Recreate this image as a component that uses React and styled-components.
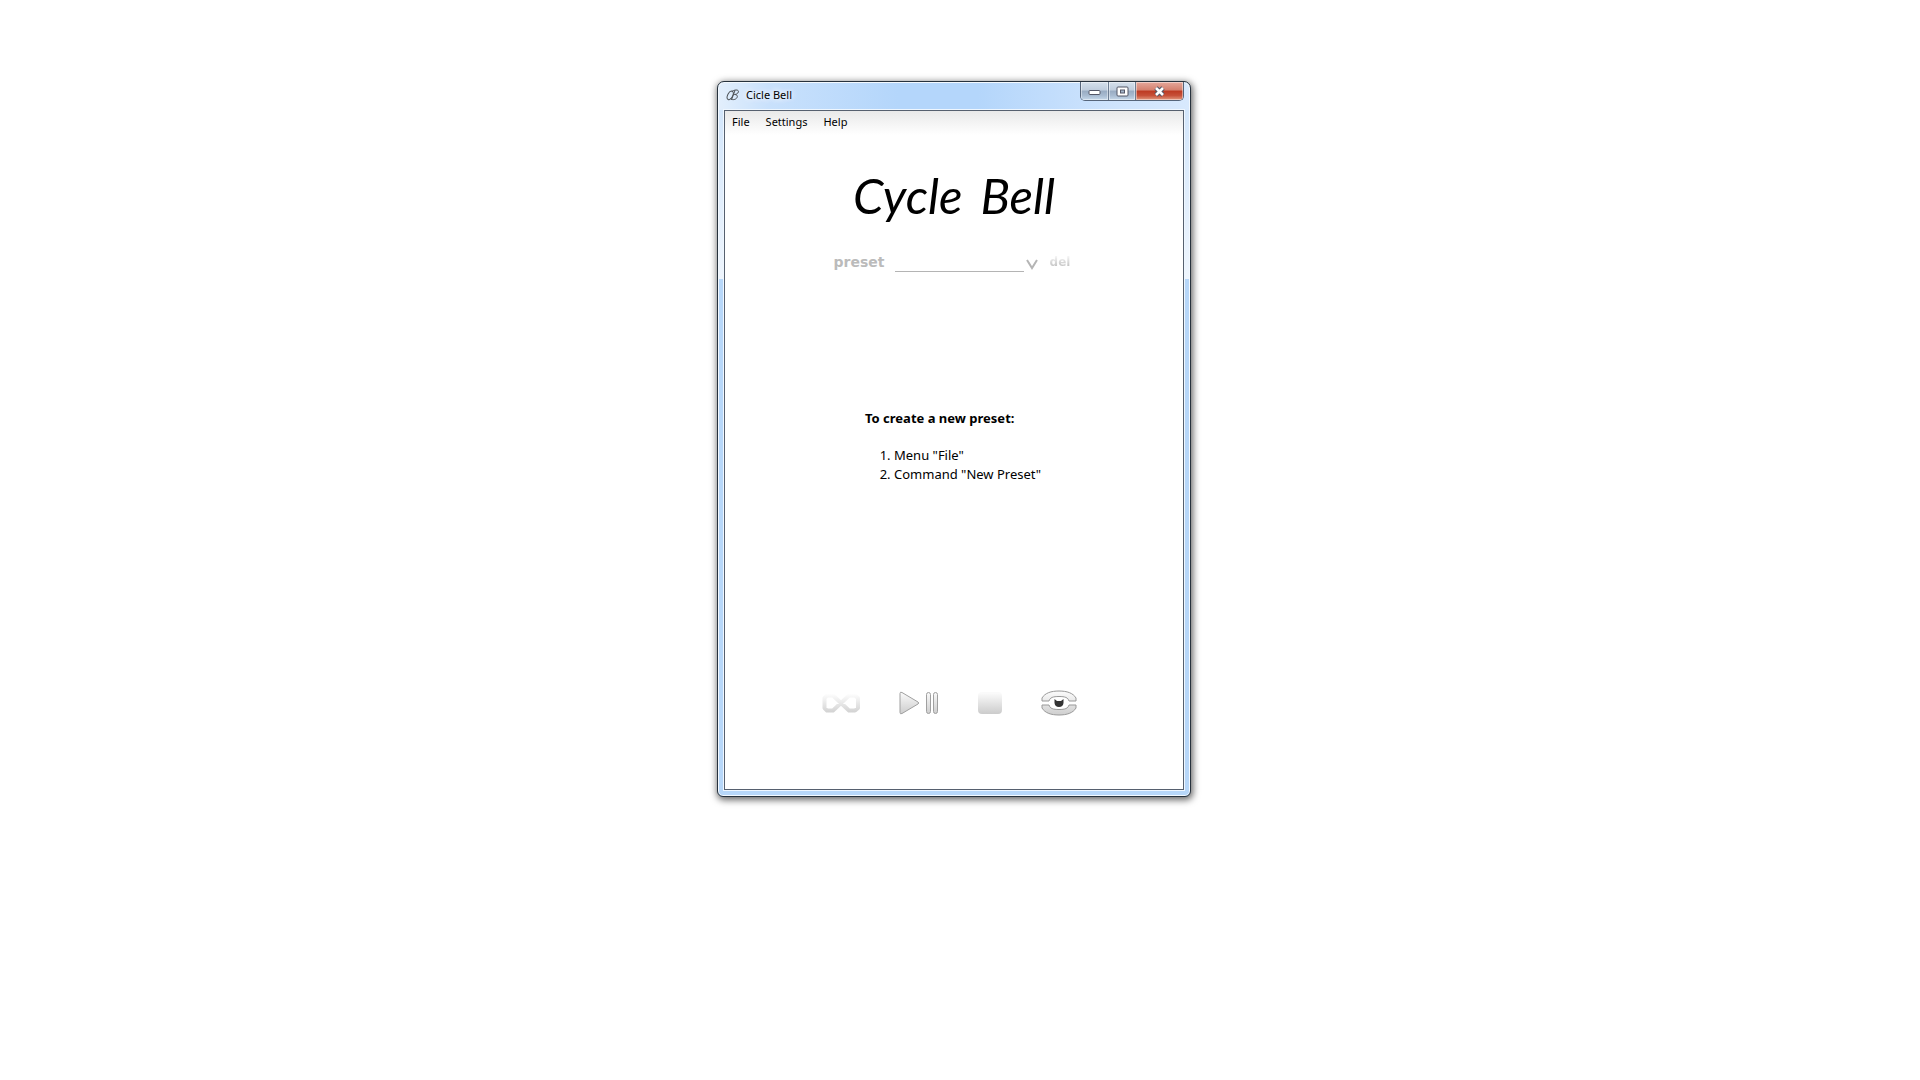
import React from "react";
import styled, { createGlobalStyle } from "styled-components";

const Global = createGlobalStyle`
  * { box-sizing: border-box; }
  body {
    margin: 0;
    background: #fff;
    color: #000;
    font: 12px/16px "Noto Sans", "Open Sans", sans-serif;
  }
  button, select { font: inherit; color: inherit; }
`;

const Desktop = styled.main`
  display: flex;
  justify-content: center;
  padding: 81px 12px 40px 0;
`;

const Window = styled.section`
  width: 474px;
  max-width: 100%;
  padding: 0 6px 6px;
  border: 1px solid #27323d;
  border-radius: 7px 7px 6px 6px;
  background:
    linear-gradient(90deg, #e3effc 0, #c9e1fc 50px, #b4d6fb 180px, #b4d6fb 260px, #cfe4fd 400px, #d8e9fd 100%) top / 100% 28px no-repeat,
    linear-gradient(#d3e6fb, #eef5fd) 0 28px / 100% 169px no-repeat,
    #b7d7f9;
  box-shadow: inset 0 0 0 1px #f3f9ff, 1px 2px 7px 1px rgba(0, 0, 0, 0.6);
`;

const TitleBar = styled.header`
  display: flex;
  height: 28px;
  padding-left: 2px;
`;

const Title = styled.h1`
  display: flex;
  align-items: center;
  gap: 6px;
  flex: 1;
  height: 26px;
  margin: 0;
  font-size: 11px;
  line-height: 16px;
  font-weight: 400;
  text-shadow: 0 0 6px #fff, 0 0 6px #fff;
`;

const CaptionButtons = styled.div`
  display: flex;
  height: 19px;
  border: 1px solid #56657a;
  border-top: 0;
  border-radius: 0 0 5px 5px;
  overflow: hidden;
`;

const CaptionButton = styled.button`
  display: flex;
  align-items: center;
  justify-content: center;
  width: ${(p) => (p.$close ? 47 : p.$wide ? 28 : 27)}px;
  padding: 0;
  border: 0;
  border-right: ${(p) => (p.$close ? "0" : "1px solid #6d7d92")};
  background: ${(p) =>
    p.$close
      ? "linear-gradient(#e5a89b 0, #d4806e 45%, #bd3a22 50%, #c65038 75%, #e29a80 100%)"
      : "linear-gradient(#d5e0ec 0, #bfcddd 45%, #98abc2 50%, #a8bbd1 75%, #c6d8ea 100%)"};
  box-shadow: inset 0 0 0 1px rgba(255, 255, 255, 0.45);
`;

const Client = styled.div`
  display: flex;
  flex-direction: column;
  align-items: center;
  padding-bottom: 73px;
  border: 1px solid #56606f;
  outline: 1px solid #eff7ff;
  background: linear-gradient(#e9e9e9, #fff 24px);
`;

const MenuBar = styled.nav`
  display: flex;
  align-self: stretch;
  gap: 16px;
  height: 22px;
  padding-left: 7px;
`;

const MenuItem = styled.button`
  padding: 0;
  border: 0;
  background: none;
  font-size: 11px;
  line-height: 16px;
`;

const Logo = styled.h2`
  display: flex;
  gap: 18px;
  margin: 24px 0 0;
  font: italic 400 49px/76px Lato, sans-serif;
`;

const PresetRow = styled.div`
  display: flex;
  align-items: center;
  height: 24px;
  margin-top: 17px;
  padding-right: 4px;
  font: 700 14px/16px "DejaVu Sans", sans-serif;
  color: #bbb;
`;

const PresetLabel = styled.label`
  margin-right: 10px;
`;

const PresetSelect = styled.select`
  width: 129px;
  height: 20px;
  margin-right: 2px;
  border: 0;
  border-bottom: 1px solid #b4b4b4;
  border-radius: 0;
  background: none;
  appearance: none;
`;

const Chevron = styled.svg`
  margin-top: 3px;
`;

const DeleteButton = styled.button`
  margin-left: 12px;
  padding: 0;
  border: 0;
  font-size: 12px;
  line-height: 16px;
  color: transparent;
  background: linear-gradient(#f4f4f4 15%, #bdbdbd 85%) text;
`;

const Hint = styled.section`
  width: 178px;
  margin-top: 135px;
  font-size: 13px;
  line-height: 19px;
  white-space: nowrap;
`;

const HintTitle = styled.h3`
  margin: 0 0 18px;
  font-size: 13px;
  line-height: 19px;
`;

const Steps = styled.ol`
  margin: 0;
  padding-left: 29px;
`;

const Controls = styled.div`
  display: flex;
  align-items: center;
  gap: 39px;
  margin-top: 206px;
  padding-right: 10px;
`;

const IconButton = styled.button`
  display: flex;
  padding: 0;
  border: 0;
  background: none;
`;

const AppIcon = () => (
  <svg width="14" height="16" viewBox="0 0 14 16" aria-hidden="true">
    <g fill="none" stroke="#4d5257" strokeLinecap="round">
      <ellipse cx="4.2" cy="8.4" rx="2.5" ry="4.6" transform="rotate(26 4.2 8.4)" />
      <path d="M9 3.5 5.6 12.5M6 4.3C9 2.3 13 2.4 12.4 5C12 6.8 9.7 7.4 8.4 7.5C11 7.4 12 8.8 11 10.6C10 12.6 6.5 13.4 5 12" />
    </g>
  </svg>
);

const Gradient = ({ id, from, to }) => (
  <defs>
    <linearGradient id={id} x1="0" y1="0" x2="0" y2="24" gradientUnits="userSpaceOnUse">
      <stop offset="0.1" stopColor={from} />
      <stop offset="0.95" stopColor={to} />
    </linearGradient>
  </defs>
);

export default function App() {
  return (
    <>
      <Global />
      <Desktop>
        <Window>
          <TitleBar>
            <Title>
              <AppIcon />
              Cicle Bell
            </Title>
            <CaptionButtons>
              <CaptionButton $wide aria-label="Minimize">
                <svg width="13" height="11"><rect x="1" y="4.5" width="11" height="4" rx="1" fill="#fff" stroke="#535666" /></svg>
              </CaptionButton>
              <CaptionButton aria-label="Maximize">
                <svg width="13" height="11">
                  <rect x="1" y="1" width="11" height="9" rx="1" fill="#fff" stroke="#535666" />
                  <rect x="4.5" y="4" width="4" height="3" fill="#a3b4c9" stroke="#535666" />
                </svg>
              </CaptionButton>
              <CaptionButton $close aria-label="Close">
                <svg width="13" height="11" fill="none">
                  <path d="M3 2 10 9M10 2 3 9" stroke="#535666" strokeWidth="4.6" />
                  <path d="M3 2 10 9M10 2 3 9" stroke="#fff" strokeWidth="2.6" />
                </svg>
              </CaptionButton>
            </CaptionButtons>
          </TitleBar>
          <Client>
            <MenuBar>
              <MenuItem>File</MenuItem>
              <MenuItem>Settings</MenuItem>
              <MenuItem>Help</MenuItem>
            </MenuBar>
            <Logo><span>Cycle</span><span>Bell</span></Logo>
            <PresetRow>
              <PresetLabel htmlFor="preset">preset</PresetLabel>
              <PresetSelect id="preset" />
              <Chevron width="12" height="12" fill="none" aria-hidden="true">
                <path d="M1 2 6 10 11 2" stroke="#b5b5b5" strokeWidth="2" />
              </Chevron>
              <DeleteButton>del</DeleteButton>
            </PresetRow>
            <Hint>
              <HintTitle>To create a new preset:</HintTitle>
              <Steps>
                <li>Menu "File"</li>
                <li>Command "New Preset"</li>
              </Steps>
            </Hint>
            <Controls>
              <IconButton aria-label="Loop">
                <svg width="38" height="24" fill="none">
                  <Gradient id="loop" from="#fff" to="#cfcfcf" />
                  <path d="M5 4.5H11L27 19.5H33L36 17V7L33 4.5H27L11 19.5H5L2.500 17V7Z" stroke="url(#loop)" strokeWidth="4" strokeLinejoin="round" />
                </svg>
              </IconButton>
              <IconButton aria-label="Play or pause">
                <svg width="40" height="24">
                  <Gradient id="play" from="#f8f8f8" to="#cdcdcd" />
                  <g fill="url(#play)" stroke="#a0a0a0" strokeLinejoin="round">
                    <path d="M1 2.500Q1 .5 3 1.500L19 11Q20.500 12 19 13L3 22.500Q1 23.500 1 21.500Z" />
                    <rect x="27.500" y="1.500" width="4" height="21" rx="2" />
                    <rect x="34.500" y="1.500" width="4" height="21" rx="2" />
                  </g>
                </svg>
              </IconButton>
              <IconButton aria-label="Stop">
                <svg width="24" height="24">
                  <Gradient id="stop" from="#fafafa" to="#cccccc" />
                  <rect y="1" width="24" height="22" rx="4" fill="url(#stop)" />
                </svg>
              </IconButton>
              <IconButton aria-label="Ring">
                <svg width="36" height="26">
                  <Gradient id="ring" from="#fafafa" to="#d2d2d2" />
                  <g fill="url(#ring)" stroke="#999" strokeLinejoin="round">
                    <path d="M1 11V8C4 3 10 1 18 1S32 3 35 8V11H28C27 7.500 24 6.500 18 6.500S9 7.500 8 11Z" />
                    <path d="M1 15V18C4 23 10 25 18 25S32 23 35 18V15H28C27 18.500 24 19.500 18 19.500S9 18.500 8 15Z" />
                  </g>
                  <path d="M13.500 9 16 11H20L22.500 9V13Q22 17 18 17T13.500 13Z" fill="#333" />
                </svg>
              </IconButton>
            </Controls>
          </Client>
        </Window>
      </Desktop>
    </>
  );
}
